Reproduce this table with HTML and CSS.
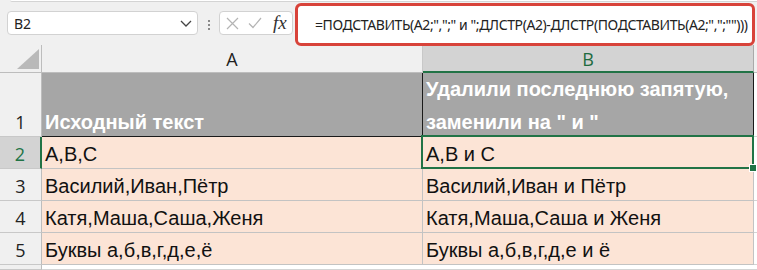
FILE: index.html
```html
<!DOCTYPE html>
<html lang="ru">
<head>
<meta charset="utf-8">
<title>Excel</title>
<link rel="stylesheet" href="styles.css">
</head>
<body>
<div class="ribbon-edge"></div>
<div class="toolbar">
  <div class="namebox">
    <span class="name">B2</span>
    <svg class="chev" width="12" height="7" viewBox="0 0 12 7"><polyline points="1,1 6,6 11,1" fill="none" stroke="#444" stroke-width="1.3"/></svg>
  </div>
  <div class="dots"><i></i><i></i><i></i></div>
  <div class="fxbox">
    <svg width="13" height="13" viewBox="0 0 13 13"><path d="M1 1 L12 12 M12 1 L1 12" stroke="#b4b4b4" stroke-width="1.2" fill="none"/></svg>
    <svg width="14" height="12" viewBox="0 0 14 12"><polyline points="1,6.5 5,10.5 13,1" fill="none" stroke="#b4b4b4" stroke-width="1.2"/></svg>
    <span class="fx">fx</span>
  </div>
  <div class="formula"><span>=ПОДСТАВИТЬ(A2;",";" и ";ДЛСТР(A2)-ДЛСТР(ПОДСТАВИТЬ(A2;",";"")))</span></div>
</div>
<div class="sheet">
  <div class="corner"><svg width="22" height="20" viewBox="0 0 22 20"><polygon points="0,20 22,0 22,20" fill="#b9b9b9"/></svg></div>
  <div class="colhead">A</div>
  <div class="colhead sel">B</div>
  <div class="colhead rest"></div>

  <div class="rowhead">1</div>
  <div class="cell title">Исходный текст</div>
  <div class="cell title wrap">Удалили последнюю запятую, заменили на " и "</div>
  <div class="cell blank"></div>

  <div class="rowhead sel">2</div>
  <div class="cell data">А,В,С</div>
  <div class="cell data active">А,В и С<span class="handle"></span></div>
  <div class="cell blank"></div>

  <div class="rowhead">3</div>
  <div class="cell data">Василий,Иван,Пётр</div>
  <div class="cell data">Василий,Иван и Пётр</div>
  <div class="cell blank"></div>

  <div class="rowhead">4</div>
  <div class="cell data">Катя,Маша,Саша,Женя</div>
  <div class="cell data">Катя,Маша,Саша и Женя</div>
  <div class="cell blank"></div>

  <div class="rowhead">5</div>
  <div class="cell data">Буквы а,б,в,г,д,е,ё</div>
  <div class="cell data">Буквы а,б,в,г,д,е и ё</div>
  <div class="cell blank"></div>

  <div class="rowhead"></div>
  <div class="cell blank"></div>
  <div class="cell blank"></div>
  <div class="cell blank"></div>
</div>
</body>
</html>
```
FILE: styles.css
```css
html, body {
  margin: 0;
  padding: 0;
}
body {
  width: 757px;
  height: 270px;
  overflow: hidden;
  background: #f0f0f0;
  font-family: "Open Sans", "Noto Sans", sans-serif;
}
.ribbon-edge {
  margin-left: 10px;
  height: 1px;
  background: #fff;
  border-bottom: 1px solid #d4d4d4;
  border-bottom-left-radius: 4px;
}
.toolbar {
  display: flex;
  align-items: flex-start;
  height: 43px;
  padding-left: 7px;
}
.namebox {
  margin-top: 9px;
  width: 191px;
  height: 24px;
  box-sizing: border-box;
  background: #fff;
  border: 1px solid #d2d2d2;
  border-radius: 4px;
  display: flex;
  align-items: center;
  justify-content: space-between;
  padding: 0 5px 0 6px;
}
.name {
  font-family: "Noto Sans", sans-serif;
  font-size: 14px;
  color: #222;
}
.dots {
  width: 21px;
  margin-top: 18px;
  display: flex;
  flex-direction: column;
  align-items: center;
  gap: 2px;
}
.dots i {
  width: 2px;
  height: 2px;
  background: #8a8a8a;
}
.fxbox {
  margin-top: 9px;
  width: 74px;
  height: 24px;
  box-sizing: border-box;
  background: #fff;
  border: 1px solid #d2d2d2;
  border-radius: 4px;
  display: flex;
  align-items: center;
  padding-left: 6px;
  gap: 9px;
}
.fx {
  font-family: "Liberation Serif", serif;
  font-style: italic;
  font-size: 19px;
  color: #333;
  margin-left: 2px;
}
.formula {
  position: relative;
  z-index: 2;
  margin-left: 2px;
  margin-top: 1px;
  width: 460px;
  height: 43px;
  box-sizing: border-box;
  background: #fff;
  border: 3px solid #d8433a;
  border-radius: 6px;
  padding: 9px 0 0 17px;
  overflow: hidden;
  white-space: nowrap;
  font-family: "Noto Sans", sans-serif;
  font-size: 14px;
  letter-spacing: -0.42px;
  color: #222;
}
.sheet {
  display: grid;
  grid-template-columns: 42px 381px 331px 1fr;
  grid-template-rows: 28px 64px repeat(4, 32px) 1fr;
  height: 225px;
}
.corner {
  box-sizing: border-box;
  border-right: 1px solid #bdbdbd;
  border-bottom: 1px solid #bdbdbd;
  display: flex;
  justify-content: flex-end;
  align-items: flex-end;
  padding: 0 2px 3px 0;
}
.colhead {
  box-sizing: border-box;
  border-right: 1px solid #c8c8c8;
  border-bottom: 1px solid #bdbdbd;
  display: flex;
  align-items: center;
  justify-content: center;
  font-size: 18px;
  color: #222;
  padding-top: 1px;
}
.colhead.sel {
  background: #d3d3d3;
  color: #1e6b3f;
  border-right-color: #a9a9a9;
  border-bottom: 2px solid #217346;
}
.colhead.rest {
  border-right: none;
}
.rowhead {
  box-sizing: border-box;
  border-right: 1px solid #bdbdbd;
  border-bottom: 1px solid #c8c8c8;
  display: flex;
  align-items: flex-end;
  justify-content: center;
  font-size: 18px;
  line-height: 27px;
  color: #222;
}
.rowhead.sel {
  background: #d3d3d3;
  color: #217346;
  border-right: 2px solid #217346;
}
.cell {
  box-sizing: border-box;
  border-right: 1px solid #c3c3c3;
  border-bottom: 1px solid #c3c3c3;
  display: flex;
  align-items: flex-end;
  padding: 0 0 0 3px;
  font-family: "Liberation Sans", Arial, sans-serif;
  font-size: 20px;
  line-height: 27px;
  white-space: nowrap;
}
.cell.title {
  background: #a6a6a6;
  color: #fff;
  font-weight: 700;
  border-right-color: #1a1a1a;
  border-bottom-color: #1a1a1a;
}
.cell.wrap {
  white-space: normal;
  align-items: flex-start;
  line-height: 33px;
  padding-right: 10px;
}
.cell.data {
  background: #fce4d6;
  color: #111;
}
.cell.blank {
  background: #fff;
  border-right: none;
  border-bottom-color: #d4d4d4;
}
.cell.active {
  position: relative;
}
.cell.active::after {
  content: "";
  position: absolute;
  left: -2px;
  top: -2px;
  right: -1px;
  bottom: -1px;
  border: 2px solid #217346;
  pointer-events: none;
}
.handle {
  position: absolute;
  right: -4px;
  bottom: -4px;
  width: 6px;
  height: 6px;
  background: #217346;
  border: 1px solid #fff;
  z-index: 1;
}
```
